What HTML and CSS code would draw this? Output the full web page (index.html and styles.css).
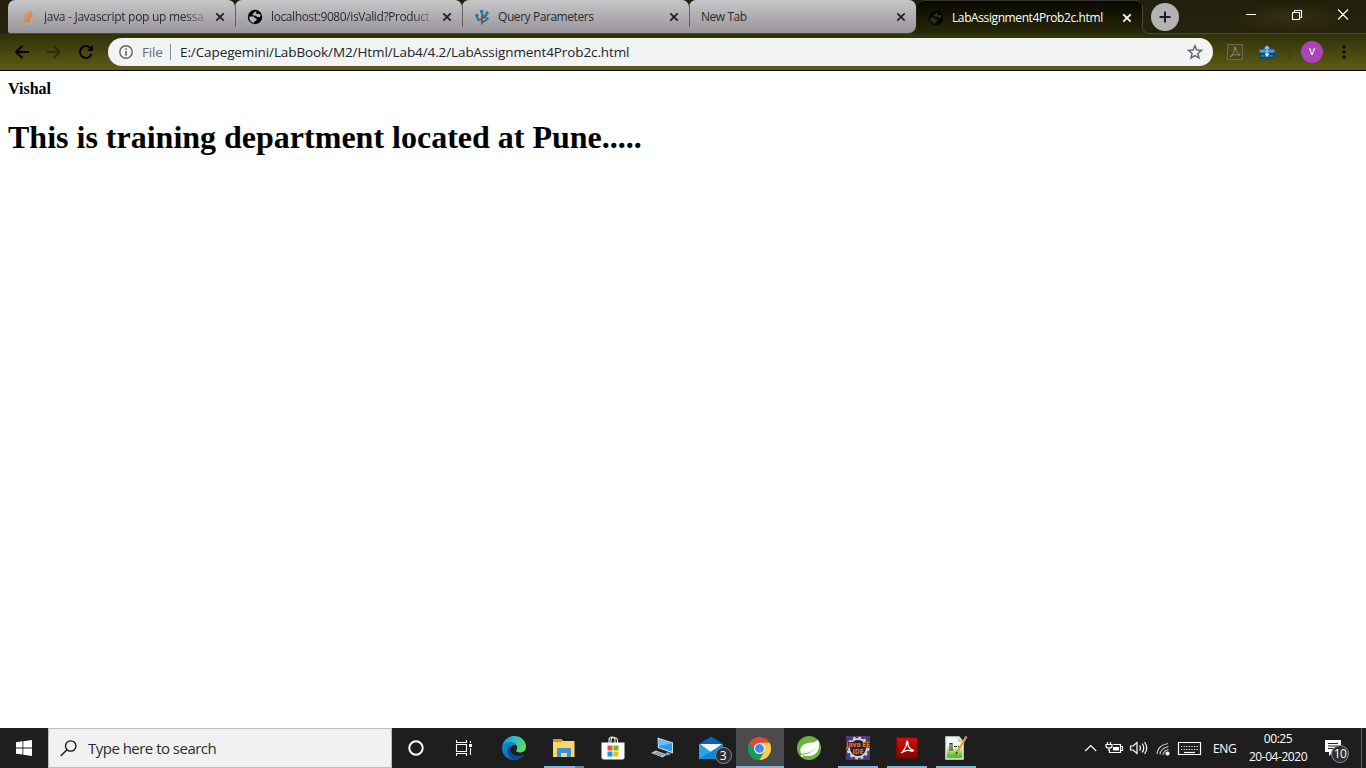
FILE: index.html
```html
<!DOCTYPE html>
<html lang="en">
<head>
<meta charset="utf-8">
<title>LabAssignment4Prob2c.html</title>
<link rel="stylesheet" href="styles.css">
</head>
<body>
<svg class="defs" width="0" height="0">
  <symbol id="close" viewBox="0 0 10 10"><path d="M1.3 1.3l7.400 7.400M8.700 1.300L1.300 8.700" fill="none" stroke="currentColor" stroke-width="1.800"/></symbol>
  <symbol id="globe" viewBox="0 0 16 16"><circle cx="8" cy="8" r="7.200"/><path class="land" d="M9.500 2.300Q7.500 2.300 7 4L5.300 5.200l.9 1.300 3 .2 1 1.500 2.800-.2.700-2.200-1.700-1.100L10.300 5 9 4.300zM2.300 7.500Q2 12.500 6.500 13.800l1-.3v-1.200l1.800-.8.500-1.700-2-.9-1-1.400z"/></symbol>
</svg>
<header class="chrome">
  <div class="tabstrip">
    <div class="tab first">
      <svg class="fav" viewBox="0 0 16 16"><path d="M2.500 10v5h8.500v-5" fill="none" stroke="#b3aaa7" stroke-width="1.200"/><g stroke="#f07d28" stroke-width="1.200"><path d="M3.600 13h6.400M3.700 10.600l6.400.7M4 8l6.200 1.800M5 5.400l5.600 3.300M7 3l4.400 4.800M10 1.600l2.400 5.400"/></g></svg>
      <span class="title fade t1">java - Javascript pop up messa</span><svg class="x"><use href="#close"/></svg>
    </div>
    <div class="tab">
      <svg class="fav globe"><use href="#globe"/></svg>
      <span class="title fade t2">localhost:9080/isValid?Product</span><svg class="x"><use href="#close"/></svg>
    </div>
    <div class="tab">
      <svg class="fav" viewBox="0 0 16 16"><path d="M8 15.500V3M8 10.500H5Q3 10.500 3 7M8 8.500h2.500L13 5M8 12.500h2.500l2-2" fill="none" stroke="#4c5358" stroke-width="1.500"/><g fill="#2479a6"><circle cx="7.700" cy="2.500" r="1.700"/><circle cx="2.800" cy="6.500" r="1.800"/><circle cx="13" cy="4" r="1.700"/><circle cx="10.300" cy="6.500" r="1.200"/><circle cx="13" cy="9.800" r="1.700"/><circle cx="4.500" cy="10.700" r="1.300"/></g></svg>
      <span class="title t3">Query Parameters</span><svg class="x"><use href="#close"/></svg>
    </div>
    <div class="tab last">
      <span class="title t4">New Tab</span><svg class="x"><use href="#close"/></svg>
    </div>
    <div class="tab active">
      <svg class="fav globe"><use href="#globe"/></svg>
      <span class="title t5">LabAssignment4Prob2c.html</span><svg class="x"><use href="#close"/></svg>
    </div>
    <div class="strip-rest">
      <svg class="edge" viewBox="0 0 8 34"><path d="M0 0v27q0 6.500 7 6.500h1V34H0z" fill="#292808"/><path d="M.5 5v21q0 7.500 7.500 7.500" fill="none" stroke="#494940"/></svg>
      <svg class="plus" viewBox="0 0 28 28"><circle cx="14" cy="14" r="14" fill="#b3b2b5"/><path d="M14 8.500v11M8.500 14h11" stroke="#202023" stroke-width="2"/></svg>
      <svg class="winbtns" viewBox="0 0 110 20" fill="none" stroke="#fff"><path d="M2 10.500h10M48.500 8.500h7v7h-7zM50.500 8V6.500h7v7H56M94 5.500l10 10M104 5.500l-10 10" stroke-width="1.100"/></svg>
    </div>
  </div>
  <div class="toolbar">
    <svg class="nav" viewBox="0 0 96 24" fill="none" stroke="#050500" stroke-width="2"><path d="M22 12H9.500M15.500 5.700L9.200 12l6.300 6.300"/><path d="M40 12h12.500M46.500 5.700l6.300 6.300-6.300 6.300" opacity=".38"/><path d="M83.800 8.500a6 6 0 1 0 .8 5.500"/><path d="M86 5v6h-6l2.500-2.500z" fill="#050500" stroke="none"/></svg>
    <div class="omnibox">
      <svg class="info" viewBox="0 0 16 16"><circle cx="8" cy="8" r="6.200" fill="none" stroke="#5f6368" stroke-width="1.400"/><path d="M8 4.200v1.600M8 7v4.800" stroke="#5f6368" stroke-width="1.600"/></svg>
      <span class="scheme">File</span><span class="bar"></span>
      <span class="url">E:/Capegemini/LabBook/M2/Html/Lab4/4.2/LabAssignment4Prob2c.html</span>
      <svg class="star" viewBox="0 0 16 16"><path d="M8 1.700l1.800 4.300 4.700.4-3.600 3 1.100 4.600-4-2.400L4 14l1.100-4.600-3.600-3L6.200 6z" fill="none" stroke="#5f6368" stroke-width="1.400"/></svg>
    </div>
    <svg class="pdf" viewBox="0 0 16 16" fill="none"><path d="M.5.500h15v15H.500z" fill="#48471b" stroke="#6d6c52"/><path d="M3 13c2-1 5-6 4.500-9.500 0-1 1-1 1 0C8.500 7 11 10 13 10.500c1 .6-.4 1-1.500.5-3-1-5-.5-8 1.500" stroke="#929078"/></svg>
    <svg class="ext" viewBox="0 0 16 16"><path d="M4 3.500Q8 .5 12 3.500l1 2H3z" fill="#1b4f80"/><path d="M0 5.500h16V13l-1.500 1.500h-13L0 13z" fill="#123f75"/><path d="M.5 5.500h15v3.200H.5z" fill="#5c9bc9"/><path d="M1.500 10.500h13v2.500h-13z" fill="#0877bb"/><path d="M8 3v9M5.800 4.700L8 2.500l2.200 2.200" fill="none" stroke="#8fd0f2" stroke-width="1.500"/><path d="M5.500 9.500h5L8 13z" fill="#d0f0ff"/></svg>
    <span class="sep"></span>
    <span class="avatar">v</span>
    <svg class="dots" viewBox="0 0 4 14"><circle cx="2" cy="2" r="1.600"/><circle cx="2" cy="7" r="1.600"/><circle cx="2" cy="12" r="1.600"/></svg>
  </div>
</header>
<main class="page">
  <b>Vishal</b>
  <h1>This is training department located at Pune.....</h1>
</main>
<footer class="taskbar">
  <div class="start"><svg width="16" height="16" viewBox="0 0 16 16" fill="#fff"><path d="M0 2.200l6.500-.9v6.200H0zM7.300 1.200L16 0v7.500H7.300zM0 8.400h6.500v6.200L0 13.700zM7.300 8.400H16V16l-8.700-1.200z"/></svg></div>
  <div class="search"><svg width="17" height="17" viewBox="0 0 17 17" fill="none" stroke="#111" stroke-width="1.300"><circle cx="10.700" cy="6" r="5.200"/><path d="M7 9.700L.7 16"/></svg><span>Type here to search</span></div>
  <div class="apps">
    <div class="app"><svg width="16" height="16" viewBox="0 0 16 16"><circle cx="8" cy="8" r="6.700" fill="none" stroke="#fff" stroke-width="2"/></svg></div>
    <div class="app view"><svg width="18" height="16" viewBox="0 0 18 16" fill="none" stroke="#fff" stroke-width="1.100"><path d="M1.500 0v2.500h10V0M1.500 4.500h10v7h-10zM1.500 16v-2.500h10V16M15.500 1v2M15.500 8v7"/><path d="M14 4h3v3h-3z" fill="#fff" stroke="none"/></svg></div>
    <div class="app"><svg width="24" height="24" viewBox="0 0 24 24"><defs><linearGradient id="eg" x1="0" y1=".2" x2="1" y2=".4"><stop stop-color="#159bd5"/><stop offset=".5" stop-color="#2dbccc"/><stop offset="1" stop-color="#62df54"/></linearGradient><linearGradient id="eb" x2="1" y2="1"><stop stop-color="#168ddb"/><stop offset="1" stop-color="#0755a3"/></linearGradient></defs><path d="M.2 11C1 4.300 5.800.1 12 .1 19 .1 24 5 24 10.500c0 3.700-2.600 6-6 6-2.500 0-4-1-3.800-1.900.1-.8 1-1.200 1-3 0-3-3-5.200-6.700-5.200C4.500 6.400 1.500 8.200.2 11z" fill="url(#eg)"/><path d="M.1 12c.6-3.600 4-5.600 8.400-5.600 3 0 5.600 1.500 6.400 3.600-1.200-1-2.800-1.300-4.200-.6C8.200 10.500 7.600 13 8.500 15.400c1.400 3.700 6 6 10.500 4.300l2.900-1.200c-2.200 3.600-6 5.500-9.900 5.500C5 24-.2 18.500.1 12z" fill="url(#eb)"/><path d="M8 9.500c-3 2.500-3.200 6.500-1.300 9.700 1.700 3 4.600 4.700 7.100 4.600 3.300-.4 6.400-2.300 8.100-5.300-5 3-11 1.700-13.200-2.400-1.200-2.300-1-4.700-.7-6.600z" fill="#084a91"/></svg></div>
    <div class="app run files"><svg width="22" height="20" viewBox="0 0 22 20"><path d="M0 1h8l2 2h11.500v16H0z" fill="#ffd668"/><path d="M0 1h8l1.500 1.500L8 4H0z" fill="#dd9409"/><path d="M4 19v-8q0-1 1-1h12q1 0 1 1v8h-4v-4H8v4z" fill="#3b92d7"/></svg></div>
    <div class="app"><svg width="24" height="24" viewBox="0 0 24 24"><path d="M8 7V4q0-3 3-3t3 3v3M10 7V4q0-2.500 3-2.500T16.500 4v3" fill="none" stroke="#eee" stroke-width="1.100"/><path d="M.5 6.500h23V22l-1.500 1.500H2L.5 22z" fill="#fff"/><path d="M6.500 9.500h5v5h-5z" fill="#f25022"/><path d="M12.500 9.500h5v5h-5z" fill="#7fba00"/><path d="M6.500 15.500h5v5h-5z" fill="#00a4ef"/><path d="M12.500 15.500h5v5h-5z" fill="#ffb900"/></svg></div>
    <div class="app"><svg width="24" height="24" viewBox="0 0 24 24"><path d="M7.500 1.500L23 6.500v11L8 12z" fill="#d9e0e3"/><path d="M8.500 3L22 7.200v8.600L9 11.500z" fill="#2b9df0"/><path d="M8.500 3L22 7.200 9 10z" fill="#64bffb"/><path d="M6 14.500l11 4-4.500 3L1 17z" fill="#c5ced2"/><path d="M4 17l8 3M6 16l8 3" stroke="#74818a"/><path d="M17 16l4 1.500-3 2-3-1z" fill="#92a0a8"/></svg></div>
    <div class="app mail"><svg width="24" height="24" viewBox="0 0 24 24"><path d="M0 8L12 .5 24 8v15H0z" fill="#0b62b8"/><path d="M1 8h22L12 17z" fill="#f5f6f7"/><path d="M0 8l12 8L24 8v15H0z" fill="#27a7e7"/><path d="M0 23L24 8v15z" fill="#1686d2"/></svg><span class="badge">3</span></div>
    <div class="app current"><svg width="23" height="23" viewBox="0 0 24 24"><circle cx="12" cy="12" r="12" fill="#dc4b3e"/><path d="M1.600 6A12 12 0 0 0 12 24l5-9-5 2.500L6.500 14z" fill="#149c5b"/><path d="M12 6h10.400A12 12 0 0 1 12 24l5.200-9z" fill="#fdcf4b"/><circle cx="12" cy="12" r="5.800" fill="#f1f1f1"/><circle cx="12" cy="12" r="4.600" fill="#4687f4"/></svg></div>
    <div class="app"><svg width="24" height="24" viewBox="0 0 24 24"><circle cx="12" cy="12" r="12" fill="#6db33f"/><path d="M21 3.500c3.500 9-1.500 17-10 16.500-3 0-5.500-.7-7-1.500 6 .5 12-2.500 15-7-4 4.500-9 6-15 6-2-5 1-9.500 7-10.500 4-.6 8-.5 10-3.500z" fill="#fff"/><circle cx="5" cy="20" r="1" fill="#fff"/></svg></div>
    <div class="app run"><svg width="24" height="24" viewBox="0 0 24 24"><path d="M0 0h24v24H0z" fill="#4c3b76"/><circle cx="12" cy="12" r="9" fill="#241d28" stroke="#d2d2d5" stroke-width="2"/><circle cx="12" cy="12" r="10.400" fill="none" stroke="#d2d2d5" stroke-width="2.200" stroke-dasharray="2.700 2.750"/><path d="M0 6h24v5.500H0zM6 11h12v7H6z" fill="#302232"/><text x=".3" y="11.200" textLength="23.500" lengthAdjust="spacingAndGlyphs" class="ide">Java EE</text><text x="6.500" y="17.500" textLength="11" lengthAdjust="spacingAndGlyphs" class="ide">IDE</text></svg></div>
    <div class="app run"><svg width="22" height="22" viewBox="0 0 22 22"><defs><linearGradient id="red" x2="0" y2="1"><stop stop-color="#d90b0b"/><stop offset="1" stop-color="#890000"/></linearGradient></defs><path d="M.5.500h21v20.500H.500z" fill="url(#red)" stroke="#790505"/><path d="M5 16c3-1.700 6.300-8 5.500-11 0-1.300 1.300-1.300 1.200 0C11.500 9 14 12.500 17 13c1.500 1-1 1.500-2.400.7-3.500-1-6-.7-9.600 2.300z" fill="none" stroke="#fff" stroke-width="1.300"/></svg></div>
    <div class="app run"><svg width="24" height="24" viewBox="0 0 24 24"><defs><linearGradient id="npp" x2="0" y2="1"><stop offset=".4" stop-color="#f7faf2"/><stop offset=".85" stop-color="#58c51d"/></linearGradient></defs><path d="M2 1h13l4 5v17H2z" fill="url(#npp)" stroke="#e7e7e3" stroke-width="1.500"/><path d="M14 1v5h5z" fill="#ccd1ca"/><path d="M6 15V7.500h2V15M10 10.500h3M14 10.500h3" fill="none" stroke="#30352c" stroke-width="1.100"/><path d="M21.500 2L13 16.500" stroke="#e5a21e" stroke-width="2.300"/><path d="M22.500.3l-1.500 2.500" stroke="#d8735a" stroke-width="2.500"/><path d="M12 15.500l2 1.300-2.500 2z" fill="#333"/></svg></div>
  </div>
  <div class="tray">
    <svg class="tray-icons" width="118" height="20" viewBox="0 0 118 20" fill="none" stroke="#fff" stroke-width="1.200">
      <path d="M1.200 13l5.500-5.500L12.200 13"/>
      <path d="M29.500 6.500h7v8h-11v-3M37 8.500h1.500v4H37"/><path d="M23.500 4v2M26.500 4v2M22 6.500h6V8q0 2-3 2t-3-2zM25 10v3"/><path d="M29 9h6v3.500h-6z" fill="#fff" stroke="none"/>
      <path d="M46.500 8h2.500l4-3.500v11L49 12h-2.500zM55.500 7.500q2 2.500 0 5M58 5.500q3.500 4.500 0 9M60.500 4q4.500 6 0 12"/>
      <g stroke-width="1.100"><path d="M73 16Q73.500 7.500 84 5.500M76 16.500Q76.500 10.500 84.500 8.500M79 17q.5-4.500 5.500-5.500" opacity=".75"/></g><circle cx="83.500" cy="15.500" r="1.500" fill="#fff"/>
      <path d="M94.500 4.500h22v12h-22z"/><path d="M97 8.500h17M97 11.500h17" stroke-dasharray="1.200 1.400"/><path d="M100 14.500h11"/>
    </svg>
    <span class="lang">ENG</span>
    <div class="clock"><span>00:25</span><span class="date">20-04-2020</span></div>
    <div class="notes"><svg width="17" height="17" viewBox="0 0 17 17"><path d="M0 0h16v12H8l-4 4v-4H0z" fill="#fff"/><path d="M3 3.500h10M3 6h10M3 8.500h8" stroke="#222"/></svg><span class="badge">10</span></div>
    <i class="peek"></i>
  </div>
</footer>
</body>
</html>
```
FILE: styles.css
```css
* { box-sizing: border-box; }
body { margin: 0; width: 1366px; height: 768px; display: flex; flex-direction: column; overflow: hidden; background: #fff; }
svg { display: block; flex: none; }
.defs { position: absolute; }
.chrome { height: 71px; flex: none; border-bottom: 1px solid #020200; font-family: "Open Sans", sans-serif; background: linear-gradient(#28250e 0, #29280b 33px, #303009 34px, #5e5c14 70px); }
.tabstrip { height: 34px; display: flex; padding-left: 8px; background: radial-gradient(ellipse 60px 16px at 1290px 17px, #46401480, transparent), linear-gradient(#211e0b, #26230d 33px, transparent 33px); }
.tab { width: 227px; height: 34px; flex: none; display: flex; align-items: center; padding-left: 12px; border-bottom: 1px solid #4a4948; border-radius: 7px 7px 0 0; background: linear-gradient(#c6c6c8, #99959a); color: #2b2c31; font-size: 12px; position: relative; }
.tab:nth-child(2)::before, .tab:nth-child(3)::before, .tab:nth-child(4)::before { content: ""; position: absolute; left: 0; top: 6px; width: 1px; height: 21px; background: #626064; }
.first { border-bottom-left-radius: 3px; }
.last { border-bottom-right-radius: 8px; }
.active { width: 225px; margin-left: 1px; padding-left: 11px; color: #fff; background: linear-gradient(#080900, #292808); border-bottom: 0; border-top: 1px solid #35352e; }
.fav { width: 16px; height: 16px; margin-right: 8px; }
.globe { fill: #000; color: #b7b6b8; }
.land { fill: currentColor; }
.active .globe { color: #303009; }
.title { white-space: nowrap; line-height: 18px; width: 162px; }
.fade { mask-image: linear-gradient(90deg, #000 87%, #0003); }
.t1 { letter-spacing: -.28px; }
.t2 { letter-spacing: -.4px; }
.t3 { letter-spacing: -.43px; }
.t4 { width: 186px; letter-spacing: -.45px; }
.t5 { letter-spacing: -.4px; }
.x { width: 10px; height: 10px; margin-left: 9px; color: #222225; }
.active .x { color: #fff; margin-left: 8px; }
.strip-rest { flex: 1; display: flex; border-bottom: 1px solid #494940; }
.edge { width: 8px; height: 34px; }
.plus { width: 28px; height: 28px; margin: 3px 0 0 1px; }
.winbtns { width: 110px; height: 20px; margin: 4px 0 0 65px; }
.toolbar { height: 36px; display: flex; align-items: center; padding-left: 7px; }
.nav { width: 96px; height: 24px; }
.omnibox { width: 1105px; height: 28px; margin-left: 5px; border-radius: 14px; background: #f1f3f4; display: flex; align-items: center; padding: 0 10px; color: #222427; line-height: 20px; }
.info { width: 16px; height: 16px; }
.scheme { width: 22px; margin-left: 8px; color: #696d71; font-size: 13.500px; letter-spacing: -.2px; }
.bar { width: 1px; height: 16px; margin-left: 6px; background: #888b8f; }
.url { margin-left: 9px; flex: 1; font-size: 13.500px; letter-spacing: -.1px; white-space: nowrap; }
.star { width: 16px; height: 16px; }
.pdf { width: 16px; height: 16px; margin-left: 14px; }
.ext { width: 16px; height: 16px; margin-left: 16px; }
.sep { width: 1px; height: 16px; margin-left: 14px; background: #3d3c0e; }
.avatar { width: 22px; height: 22px; margin-left: 11px; border-radius: 50%; background: #a844b8; color: #fff; font-size: 12px; line-height: 20px; text-align: center; }
.dots { width: 4px; height: 14px; margin-left: 19px; fill: #000; }
.page { flex: 1; padding: 9px 8px 0; color: #000; font: 16px "Liberation Serif", serif; }
.page h1 { margin: 21px 0; font-size: 32px; }
.taskbar { height: 40px; flex: none; display: flex; background: #1e1e1e; color: #fff; font-family: "Open Sans", sans-serif; }
.start { width: 48px; display: flex; align-items: center; justify-content: center; }
.search { width: 344px; display: flex; align-items: center; gap: 11px; padding-left: 11px; background: #f1f1f1; border: 1px solid #bcbcbc; color: #2c2c2c; font-size: 15px; letter-spacing: -.52px; }
.apps { display: flex; gap: 1.140px; }
.app { width: 48px; height: 40px; display: flex; align-items: center; justify-content: center; position: relative; }
.view { padding-right: 2px; }
.run::after, .current::after { content: ""; position: absolute; left: 4px; right: 4px; bottom: 0; height: 2px; background: #78baf0; }
.files::after { background: linear-gradient(90deg, #78baf0 78%, #5586ad 78%); }
.files { padding-left: 2px; }
.files::after { left: 5px; right: 3px; }
.current { background: #4b4b4b; }
.current::after { left: 0; right: 0; }
.badge { position: absolute; width: 17px; height: 17px; border: 1px solid #8c8c8c; border-radius: 50%; background: #303030; font-size: 12px; line-height: 15px; text-align: center; }
.mail .badge { left: 28px; top: 19px; }
.ide { font: bold 7px "Open Sans", sans-serif; fill: #f47b20; }
.tray { flex: 1; display: flex; align-items: center; justify-content: flex-end; font-size: 12px; }
.tray-icons { margin-right: 11px; }
.lang { width: 24px; letter-spacing: -.4px; }
.clock { width: 66px; margin-left: 8px; display: flex; flex-direction: column; align-items: center; line-height: 18px; letter-spacing: -.45px; }
.notes { margin-left: 14px; width: 36px; position: relative; }
.notes .badge { left: 6px; top: 5px; width: 18px; height: 18px; line-height: 16px; letter-spacing: -.5px; }
.peek { width: 1px; height: 40px; margin-right: 4px; background: #676767; }
```
